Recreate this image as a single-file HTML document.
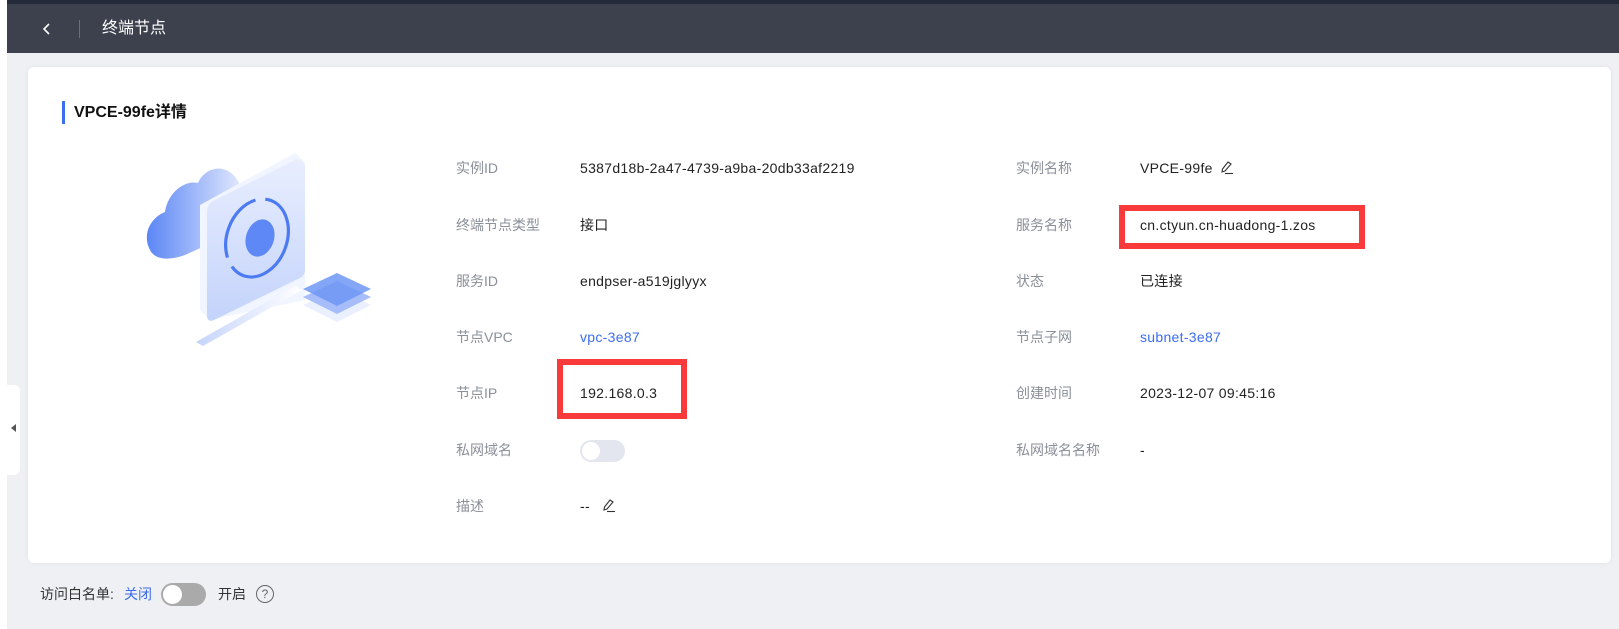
<!DOCTYPE html>
<html><head><meta charset="utf-8">
<style>
*{margin:0;padding:0;box-sizing:border-box}
body{width:1619px;height:629px;overflow:hidden;background:#eef0f4;font-family:"Liberation Sans","Noto Sans CJK SC",sans-serif;font-size:14px;color:#222;position:relative}
.abs{position:absolute;white-space:nowrap}
.lbl{position:absolute;color:#8a8f99;font-size:14px;line-height:20px;white-space:nowrap}
.val{position:absolute;color:#222;font-size:14px;line-height:20px;white-space:nowrap;letter-spacing:.3px}
.link{color:#3d6df0}
.red{position:absolute;border:6px solid #f83a3a}
</style></head><body>
<div class="abs" style="left:0;top:0;width:7px;height:629px;background:#fff"></div>
<div class="abs" style="left:7px;top:0;width:1612px;height:4px;background:#252a3a"></div>
<div class="abs" style="left:7px;top:4px;width:1612px;height:49px;background:#3d414e"></div>
<svg class="abs" style="left:42px;top:21px" width="10" height="16" viewBox="0 0 10 16"><path d="M7 3 L2 8 L7 13" stroke="#fff" stroke-width="1.6" fill="none"/></svg>
<div class="abs" style="left:79px;top:20px;width:1px;height:18px;background:#6b6f7a"></div>
<div class="abs" style="left:102px;top:19px;color:#fff;font-size:16px;line-height:20px">终端节点</div>

<div class="abs" style="left:28px;top:67px;width:1583px;height:496px;background:#fff;border-radius:6px;box-shadow:0 0 6px rgba(0,0,0,.05)"></div>
<div class="abs" style="left:62px;top:101px;width:3px;height:23px;background:#3d6df0"></div>
<div class="abs" style="left:74px;top:102px;font-size:16px;font-weight:bold;line-height:22px;color:#111">VPCE-99fe详情</div>

<svg class="abs" style="left:140px;top:150px" width="240" height="200" viewBox="0 0 240 200">
<defs>
<linearGradient id="c" x1="0" y1="0" x2="1" y2="0"><stop offset="0" stop-color="#5b86f5"/><stop offset="1" stop-color="#dfe7fd"/></linearGradient>
<linearGradient id="p" x1="0" y1="0" x2="0" y2="1"><stop offset="0" stop-color="#e8eefe"/><stop offset="1" stop-color="#c4d3fb"/></linearGradient>
<linearGradient id="b" x1="0" y1="0" x2="1" y2="0"><stop offset="0" stop-color="#c5d4fb"/><stop offset="1" stop-color="#ffffff"/></linearGradient>
</defs>
<path d="M10 100 C2 85 10 68 25 62 C28 42 45 30 58 33 C66 15 90 12 100 35 L100 80 L45 105 C25 112 14 108 10 100Z" fill="url(#c)"/>
<path d="M60 55 L155 3 L165 12 L165 150 L70 170 L60 160Z" fill="#f1f5ff"/>
<path d="M67 62 C67 56 70 52 75 50 L155 10 C160 8 165 12 165 18 L165 120 C165 124 163 126 160 128 L74 170 C70 172 67 170 67 166Z" fill="url(#p)"/>
<ellipse cx="117" cy="88" rx="30" ry="40" transform="rotate(20 117 88)" fill="none" stroke="#4b7af3" stroke-width="3.2" stroke-dasharray="70 10"/>
<ellipse cx="120" cy="88" rx="14" ry="19" transform="rotate(18 120 88)" fill="#5d88f5"/>
<path d="M56 192 L63 196 L162 140 L155 136Z" fill="url(#b)"/>
<path d="M163 155 L197 139 L231 155 L197 172Z" fill="#eaf0fe"/>
<path d="M163 147 L197 131 L231 147 L197 164Z" fill="#a6bdf9"/>
<path d="M163 139 L197 123 L231 139 L197 156Z" fill="#6f97f6" opacity=".85"/>
</svg>

<div class="lbl" style="left:456px;top:158px">实例ID</div>
<div class="val" style="left:580px;top:158px">5387d18b-2a47-4739-a9ba-20db33af2219</div>
<div class="lbl" style="left:456px;top:215px">终端节点类型</div>
<div class="val" style="left:580px;top:215px">接口</div>
<div class="lbl" style="left:456px;top:271px">服务ID</div>
<div class="val" style="left:580px;top:271px">endpser-a519jglyyx</div>
<div class="lbl" style="left:456px;top:327px">节点VPC</div>
<div class="val link" style="left:580px;top:327px">vpc-3e87</div>
<div class="lbl" style="left:456px;top:383px">节点IP</div>
<div class="val" style="left:580px;top:383px">192.168.0.3</div>
<div class="red" style="left:557px;top:359px;width:130px;height:60px"></div>
<div class="lbl" style="left:456px;top:440px">私网域名</div>
<div class="abs" style="left:580px;top:440px;width:45px;height:22px;border-radius:11px;background:#e3e6ee"></div>
<div class="abs" style="left:582px;top:442px;width:18px;height:18px;border-radius:50%;background:#fff"></div>
<div class="lbl" style="left:456px;top:496px">描述</div>
<div class="val" style="left:580px;top:496px">--</div>
<svg class="abs" style="left:602px;top:498px" width="14" height="15" viewBox="0 0 14 15"><path d="M8 2 L11 4 L5 11 L2 12 L2.5 9Z" stroke="#333" stroke-width="1.1" fill="none"/><path d="M5 13.5 H13" stroke="#333" stroke-width="1.1"/></svg>

<div class="lbl" style="left:1016px;top:158px">实例名称</div>
<div class="val" style="left:1140px;top:158px">VPCE-99fe</div>
<svg class="abs" style="left:1220px;top:160px" width="14" height="15" viewBox="0 0 14 15"><path d="M8 2 L11 4 L5 11 L2 12 L2.5 9Z" stroke="#333" stroke-width="1.1" fill="none"/><path d="M5 13.5 H13" stroke="#333" stroke-width="1.1"/></svg>
<div class="lbl" style="left:1016px;top:215px">服务名称</div>
<div class="val" style="left:1140px;top:215px">cn.ctyun.cn-huadong-1.zos</div>
<div class="red" style="left:1119px;top:205px;width:246px;height:44px"></div>
<div class="lbl" style="left:1016px;top:271px">状态</div>
<div class="val" style="left:1140px;top:271px">已连接</div>
<div class="lbl" style="left:1016px;top:327px">节点子网</div>
<div class="val link" style="left:1140px;top:327px">subnet-3e87</div>
<div class="lbl" style="left:1016px;top:383px">创建时间</div>
<div class="val" style="left:1140px;top:383px">2023-12-07 09:45:16</div>
<div class="lbl" style="left:1016px;top:440px">私网域名名称</div>
<div class="val" style="left:1140px;top:440px">-</div>

<div class="abs" style="left:7px;top:385px;width:13px;height:90px;background:#fff;border-radius:0 6px 6px 0"></div>
<div class="abs" style="left:11px;top:424px;width:0;height:0;border-top:4px solid transparent;border-bottom:4px solid transparent;border-right:5px solid #555"></div>

<div class="abs" style="left:40px;top:584px;color:#333;line-height:20px">访问白名单:</div>
<div class="abs link" style="left:124px;top:584px;line-height:20px">关闭</div>
<div class="abs" style="left:161px;top:583px;width:45px;height:23px;border-radius:12px;background:#aaa"></div>
<div class="abs" style="left:163px;top:585px;width:19px;height:19px;border-radius:50%;background:#fff"></div>
<div class="abs" style="left:218px;top:584px;color:#333;line-height:20px">开启</div>
<div class="abs" style="left:256px;top:585px;width:18px;height:18px;border-radius:50%;border:1.3px solid #666;color:#666;font-size:12px;line-height:16px;text-align:center">?</div>
</body></html>
